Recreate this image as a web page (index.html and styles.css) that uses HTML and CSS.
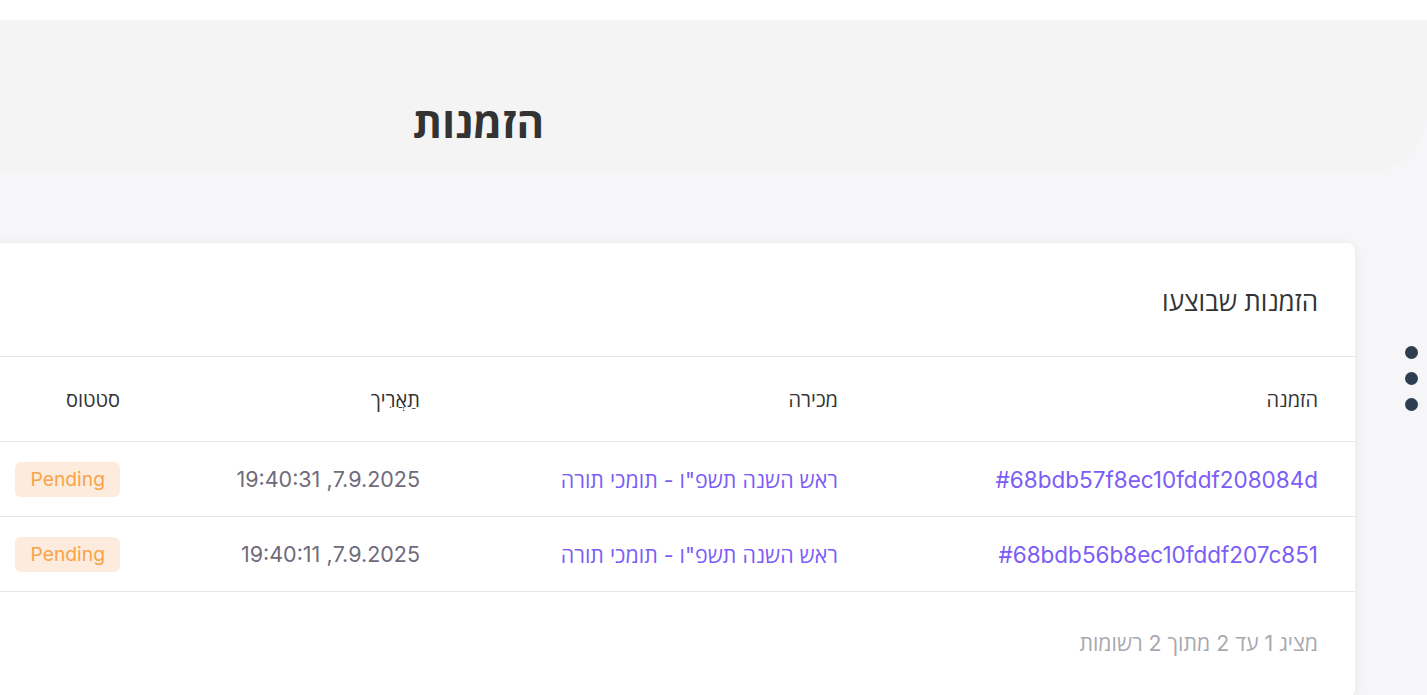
FILE: index.html
```html
<!DOCTYPE html>
<html lang="he" dir="rtl">
<head>
<meta charset="utf-8">
<title>הזמנות</title>
<link rel="stylesheet" href="styles.css">
</head>
<body>
<div class="topbar"></div>
<header class="hero">
  <h1 class="hero-title">הזמנות</h1>
</header>
<main class="content">
  <div class="dots" aria-label="more">
    <span class="dot"></span><span class="dot"></span><span class="dot"></span>
  </div>
  <section class="card">
    <h2 class="card-title">הזמנות שבוצעו</h2>
    <div class="table">
      <div class="row head">
        <div class="cell">הזמנה</div>
        <div class="cell">מכירה</div>
        <div class="cell">תַאֲרִיך</div>
        <div class="cell">סטטוס</div>
      </div>
      <div class="row">
        <div class="cell"><a class="link id" href="#">#68bdb57f8ec10fddf208084d</a></div>
        <div class="cell"><a class="link sale" href="#">ראש השנה תשפ"ו - תומכי תורה</a></div>
        <div class="cell date">7.9.2025, 19:40:31</div>
        <div class="cell"><span class="badge">Pending</span></div>
      </div>
      <div class="row">
        <div class="cell"><a class="link id" href="#">#68bdb56b8ec10fddf207c851</a></div>
        <div class="cell"><a class="link sale" href="#">ראש השנה תשפ"ו - תומכי תורה</a></div>
        <div class="cell date">7.9.2025, 19:40:11</div>
        <div class="cell"><span class="badge">Pending</span></div>
      </div>
    </div>
    <p class="footer-note">מציג 1 עד 2 מתוך 2 רשומות</p>
  </section>
</main>
</body>
</html>
```

FILE: styles.css
```css
* { box-sizing: border-box; }
html, body { margin: 0; padding: 0; }
body {
  background: #f6f6f9;
  font-family: "Inter", "Open Sans", "Liberation Sans", sans-serif;
  color: #333;
  overflow: hidden;
  width: 1427px;
  height: 695px;
}
.topbar {
  height: 20px;
  background: #ffffff;
}
.hero {
  height: 153px;
  background: #f4f4f5;
  border-bottom-right-radius: 60px;
  display: flex;
  align-items: flex-end;
  padding-right: 883px;
  padding-bottom: 29px;
}
.hero-title {
  margin: 0;
  font-size: 42px;
  font-weight: 700;
  color: #333;
  line-height: 1;
}
.content {
  display: flex;
  align-items: flex-start;
  padding-top: 70px;
}
.dots {
  display: flex;
  flex-direction: column;
  gap: 13px;
  width: 72px;
  flex-shrink: 0;
  padding-right: 9px;
  margin-top: 103px;
}
.dot {
  width: 13px;
  height: 13px;
  border-radius: 50%;
  background: #2c3e50;
}
.card {
  background: #fff;
  border-radius: 8px;
  box-shadow: 0 2px 12px rgba(30, 30, 60, 0.06);
  width: 1376px;
  flex-shrink: 0;
}
.card-title {
  margin: 0;
  padding: 40px 37px 0 37px;
  height: 114px;
  font-size: 26px;
  font-weight: 400;
  color: #333;
  border-bottom: 1px solid #e6e6e9;
}
.row {
  display: grid;
  grid-template-columns: 480px 418px 300px 1fr;
  align-items: center;
  height: 75px;
  padding: 0 37px;
  border-bottom: 1px solid #e6e6e9;
}
.row.head {
  height: 85px;
  font-size: 20px;
  color: #333;
}
.cell { white-space: nowrap; }
.link {
  color: #7b5cf7;
  text-decoration: none;
}
.link.id { font-size: 22.5px; }
.link.sale { font-size: 21.4px; }
.date {
  color: #6e6b7b;
  font-size: 21.5px;
}
.badge {
  display: inline-block;
  background: #fdecdd;
  color: #f7a34b;
  border-radius: 6px;
  font-size: 19.3px;
  padding: 5px 15px;
  line-height: 25px;
}
.footer-note {
  margin: 0;
  padding: 36px 37px 40px;
  font-size: 21.3px;
  color: #a8a8b0;
}
```
